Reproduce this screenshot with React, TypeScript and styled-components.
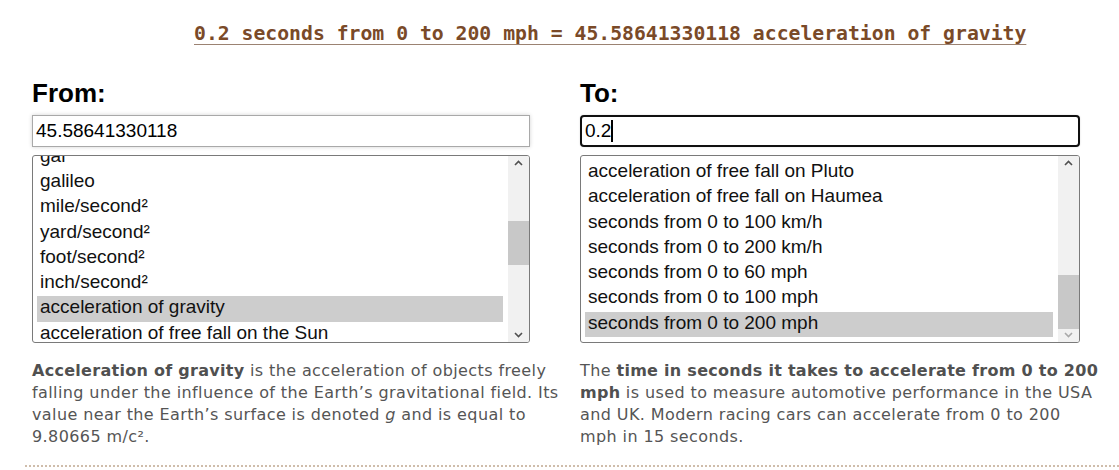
import React from "react";
import styled, { createGlobalStyle } from "styled-components";

const GlobalStyle = createGlobalStyle`
  html, body { margin: 0; padding: 0; background: #fff; }
  body { font-family: "Liberation Sans", Arial, sans-serif; }
`;

const Page = styled.div`
  width: 1119px;
  height: 470px;
  padding-left: 25px;
  box-sizing: border-box;
  overflow: hidden;
`;

const TitleRow = styled.div`
  padding: 22px 0 0 169px;
`;

const Title = styled.span`
  font-family: "DejaVu Sans Mono", "Liberation Mono", monospace;
  font-weight: bold;
  font-size: 19.75px;
  line-height: 24px;
  color: #7a4a28;
  text-decoration: underline;
  text-decoration-color: #9b8272;
  text-decoration-thickness: 1px;
  text-underline-offset: 4px;
  white-space: nowrap;
`;

const Columns = styled.div`
  display: grid;
  grid-template-columns: 532px 521px;
  column-gap: 16px;
  padding: 32px 0 0 7px;
`;

const Column = styled.div`
  display: flex;
  flex-direction: column;
`;

const Label = styled.div`
  font-family: "Liberation Sans", Arial, sans-serif;
  font-weight: bold;
  font-size: 26px;
  line-height: 30px;
  color: #000;
`;

const Input = styled.div<{ $focused?: boolean; $w: number }>`
  margin-top: 7px;
  width: ${(p) => p.$w}px;
  height: 32px;
  box-sizing: border-box;
  display: flex;
  align-items: center;
  padding-left: 3px;
  font-family: "Liberation Sans", Arial, sans-serif;
  font-size: 19px;
  color: #000;
  background: #fff;
  border: ${(p) => (p.$focused ? "2px solid #101010" : "1px solid #a9a9a9")};
  border-radius: ${(p) => (p.$focused ? "4px" : "0")};
  box-shadow: ${(p) =>
    p.$focused ? "0 0 2px rgba(0,0,0,0.15)" : "0 0 4px rgba(0,0,0,0.18)"};
`;

const Caret = styled.span`
  display: inline-block;
  width: 2px;
  height: 22px;
  background: #000;
`;

const ListBox = styled.div<{ $w: number }>`
  margin-top: 8px;
  width: ${(p) => p.$w}px;
  height: 188px;
  box-sizing: border-box;
  border: 1px solid #7a7a7a;
  border-radius: 3px;
  display: flex;
  overflow: hidden;
  background: #fff;
`;

const Options = styled.div`
  flex: 1;
  overflow: hidden;
  padding: 4px 5px 0 4px;
`;

const Track = styled.div<{ $offset: number }>`
  margin-top: ${(p) => p.$offset}px;
`;

const Option = styled.div<{ $selected?: boolean }>`
  height: 25.3px;
  line-height: 21px;
  padding-left: 3px;
  font-family: "Liberation Sans", Arial, sans-serif;
  font-size: 19px;
  color: #111;
  white-space: nowrap;
  background: ${(p) => (p.$selected ? "#cdcdcd" : "transparent")};
`;

const ScrollBar = styled.div`
  width: 21px;
  background: #f1f1f1;
  display: flex;
  flex-direction: column;
`;

const ArrowButton = styled.div`
  height: 14px;
  display: flex;
  align-items: center;
  justify-content: center;
`;

const ScrollTrack = styled.div`
  flex: 1;
  display: flex;
  flex-direction: column;
`;

const Thumb = styled.div<{ $top: number; $h: number }>`
  margin-top: ${(p) => p.$top}px;
  height: ${(p) => p.$h}px;
  background: #c8c8c8;
`;

const Description = styled.p`
  margin: 17px 0 0 0;
  font-family: "DejaVu Sans", Verdana, sans-serif;
  font-size: 16px;
  letter-spacing: 0.4px;
  line-height: 22px;
  color: #555;
  b { color: #505050; letter-spacing: 0.28px; }
`;

const Footer = styled.div`
  margin-top: 17px;
  border-top: 2px dotted #cfbdab;
`;

const Chevron = ({ up, disabled }: { up?: boolean; disabled?: boolean }) => (
  <svg width="9" height="6" viewBox="0 0 9 6">
    <polyline
      points={up ? "1,5 4.5,1.5 8,5" : "1,1 4.5,4.5 8,1"}
      fill="none"
      stroke={disabled ? "#a9a9a9" : "#505050"}
      strokeWidth="1.6"
    />
  </svg>
);

const ROW = 25.3;

type ListProps = {
  items: string[];
  selected: number;
  firstVisible: number;
  extra: number;
  width: number;
  thumbTop: number;
  thumbH: number;
  atEnd?: boolean;
};

const UnitList = ({ items, selected, firstVisible, extra, width, thumbTop, thumbH, atEnd }: ListProps) => (
  <ListBox $w={width}>
    <Options>
      <Track $offset={-(firstVisible * ROW) + extra}>
        {items.map((it, i) => (
          <Option key={i} $selected={i === selected}>
            {it}
          </Option>
        ))}
      </Track>
    </Options>
    <ScrollBar>
      <ArrowButton>
        <Chevron up />
      </ArrowButton>
      <ScrollTrack>
        <Thumb $top={thumbTop} $h={thumbH} />
      </ScrollTrack>
      <ArrowButton>
        <Chevron disabled={atEnd} />
      </ArrowButton>
    </ScrollBar>
  </ListBox>
);

const fromItems = [
  "meter/second²",
  "kilometer/second²",
  "centimeter/second²",
  "millimeter/second²",
  "gal",
  "galileo",
  "mile/second²",
  "yard/second²",
  "foot/second²",
  "inch/second²",
  "acceleration of gravity",
  "acceleration of free fall on the Sun",
  "acceleration of free fall on Mercury",
];

const toItems = [
  "acceleration of free fall on Pluto",
  "acceleration of free fall on Haumea",
  "seconds from 0 to 100 km/h",
  "seconds from 0 to 200 km/h",
  "seconds from 0 to 60 mph",
  "seconds from 0 to 100 mph",
  "seconds from 0 to 200 mph",
];

export default function App() {
  return (
    <>
      <GlobalStyle />
      <Page>
        <TitleRow>
          <Title>0.2 seconds from 0 to 200 mph = 45.58641330118 acceleration of gravity</Title>
        </TitleRow>
        <Columns>
          <Column>
            <Label>From:</Label>
            <Input $w={498}>45.58641330118</Input>
            <UnitList
              items={fromItems}
              selected={10}
              firstVisible={4}
              extra={-15.3}
              width={498}
              thumbTop={51}
              thumbH={44}
            />
            <Description>
              <b>Acceleration of gravity</b> is the acceleration of objects freely falling under the
              influence of the Earth’s gravitational field. Its value near the Earth’s surface is
              denoted <i>g</i> and is equal to 9.80665 m/c².
            </Description>
          </Column>
          <Column>
            <Label>To:</Label>
            <Input $w={500} $focused>
              0.2
              <Caret />
            </Input>
            <UnitList
              items={toItems}
              selected={6}
              firstVisible={0}
              extra={0}
              width={500}
              thumbTop={105}
              thumbH={54}
              atEnd
            />
            <Description>
              The <b>time in seconds it takes to accelerate from 0 to 200 mph</b> is used to measure
              automotive performance in the USA and UK. Modern racing cars can accelerate from 0 to
              200 mph in 15 seconds.
            </Description>
          </Column>
        </Columns>
        <Footer />
      </Page>
    </>
  );
}
